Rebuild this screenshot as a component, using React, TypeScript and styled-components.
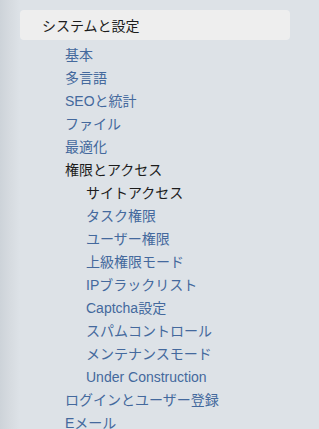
import React from "react";
import styled, { createGlobalStyle } from "styled-components";

const GlobalStyle = createGlobalStyle`
  html, body {
    margin: 0;
    padding: 0;
    background: #dde2e7;
  }
  body {
    font-family: "Liberation Sans", "Noto Sans CJK JP", sans-serif;
    font-size: 14px;
  }
`;

const Sidebar = styled.div`
  width: 319px;
  height: 429px;
  overflow: hidden;
  background: linear-gradient(
    to right,
    #cdd3d9 0px,
    #d6dbe0 10px,
    #dde2e7 20px,
    #dde2e7 100%
  );
  padding-top: 10px;
  box-sizing: border-box;
`;

const SectionHeader = styled.div`
  margin-left: 20px;
  width: 270px;
  height: 30px;
  border-radius: 4px;
  background: #eeeeee;
  display: flex;
  align-items: center;
  padding-left: 22px;
  box-sizing: border-box;
  color: #1c1c1c;
  font-size: 14px;
`;

const MenuList = styled.ul`
  list-style: none;
  margin: 4px 0 0;
  padding: 0;
`;

const MenuItem = styled.li<{ $level: number; $active?: boolean }>`
  height: 23px;
  line-height: 23px;
  padding-left: ${({ $level }) => ($level === 2 ? 86 : 65)}px;
  color: ${({ $active }) => ($active ? "#1c1c1c" : "#44699d")};
  font-size: 14px;
  white-space: nowrap;
`;

const items: Array<{ label: string; level: number; active?: boolean }> = [
  { label: "基本", level: 1 },
  { label: "多言語", level: 1 },
  { label: "SEOと統計", level: 1 },
  { label: "ファイル", level: 1 },
  { label: "最適化", level: 1 },
  { label: "権限とアクセス", level: 1, active: true },
  { label: "サイトアクセス", level: 2, active: true },
  { label: "タスク権限", level: 2 },
  { label: "ユーザー権限", level: 2 },
  { label: "上級権限モード", level: 2 },
  { label: "IPブラックリスト", level: 2 },
  { label: "Captcha設定", level: 2 },
  { label: "スパムコントロール", level: 2 },
  { label: "メンテナンスモード", level: 2 },
  { label: "Under Construction", level: 2 },
  { label: "ログインとユーザー登録", level: 1 },
  { label: "Eメール", level: 1 },
];

export default function App() {
  return (
    <>
      <GlobalStyle />
      <Sidebar>
        <SectionHeader>システムと設定</SectionHeader>
        <MenuList>
          {items.map((item) => (
            <MenuItem key={item.label} $level={item.level} $active={item.active}>
              {item.label}
            </MenuItem>
          ))}
        </MenuList>
      </Sidebar>
    </>
  );
}
